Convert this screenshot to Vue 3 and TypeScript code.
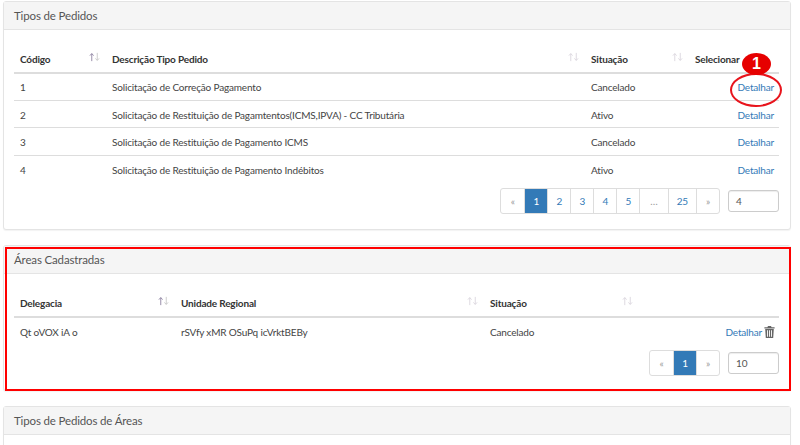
<template>
  <div class="page">
    <section class="panel first">
      <h3 class="panel-title">Tipos de Pedidos</h3>
      <div class="panel-body">
        <table class="grid">
          <colgroup>
            <col style="width: 92px" />
            <col style="width: 479px" />
            <col style="width: 104px" />
            <col />
          </colgroup>
          <thead>
            <tr>
              <th v-for="(h, i) in pedidoCols" :key="h">
                {{ h }}
                <svg v-if="i < 3" class="sort" viewBox="0 0 12 10" :class="{ active: i === 0 }">
                  <path class="up" d="M3 9.5V1.5M1 3.5L3 1.2L5 3.5" />
                  <path class="down" d="M9 .5V8.5M7 6.5L9 8.8L11 6.5" />
                </svg>
              </th>
            </tr>
          </thead>
          <tbody>
            <tr v-for="p in pedidos" :key="p.id">
              <td>{{ p.id }}</td>
              <td>{{ p.desc }}</td>
              <td>{{ p.status }}</td>
              <td class="act"><a>Detalhar</a></td>
            </tr>
          </tbody>
        </table>
        <div class="pager-row">
          <ul class="pager">
            <li
              v-for="n in pages"
              :key="n"
              :class="{ on: n === '1', off: n === '«' || n === '»' || n === '…', wide: n === '…' || n === '25' }"
            >{{ n }}</li>
          </ul>
          <div class="size">4</div>
        </div>
      </div>
      <div class="callout">
        <span class="ring"></span>
        <span class="badge">1</span>
      </div>
    </section>

    <section class="panel second">
      <h3 class="panel-title">Áreas Cadastradas</h3>
      <div class="panel-body">
        <table class="grid">
          <colgroup>
            <col style="width: 161px" />
            <col style="width: 309px" />
            <col style="width: 155px" />
            <col />
          </colgroup>
          <thead>
            <tr>
              <th v-for="h in areaCols" :key="h">
                {{ h }}
                <svg class="sort" viewBox="0 0 12 10" :class="{ active: h === 'Delegacia' }">
                  <path class="up" d="M3 9.5V1.5M1 3.5L3 1.2L5 3.5" />
                  <path class="down" d="M9 .5V8.5M7 6.5L9 8.8L11 6.5" />
                </svg>
              </th>
              <th></th>
            </tr>
          </thead>
          <tbody>
            <tr>
              <td>Qt oVOX iA o</td>
              <td>rSVfy xMR OSuPq icVrktBEBy</td>
              <td>Cancelado</td>
              <td class="act trash-cell">
                <a>Detalhar</a>
                <svg class="trash" viewBox="0 0 11 12">
                  <path d="M4 0h3l.6 1.2H10.6V2.4H.4V1.2H3.4zM1.2 3H9.8L9.2 12H1.8zM3 4.2V10.8H3.9V4.2zM5.05 4.2V10.8H5.95V4.2zM7.1 4.2V10.8H8V4.2z" fill-rule="evenodd" />
                </svg>
              </td>
            </tr>
          </tbody>
        </table>
        <div class="pager-row tight">
          <ul class="pager">
            <li class="off">«</li>
            <li class="on">1</li>
            <li class="off">»</li>
          </ul>
          <div class="size">10</div>
        </div>
      </div>
      <div class="redbox"></div>
    </section>

    <section class="panel third">
      <h3 class="panel-title">Tipos de Pedidos de Áreas</h3>
    </section>
  </div>
</template>

<script setup lang="ts">
const pedidoCols = ["Código", "Descrição Tipo Pedido", "Situação", "Selecionar"]

const areaCols = ["Delegacia", "Unidade Regional", "Situação"]

const pedidos = [
  { id: 1, desc: "Solicitação de Correção Pagamento", status: "Cancelado" },
  { id: 2, desc: "Solicitação de Restituição de Pagamtentos(ICMS,IPVA) - CC Tributária", status: "Ativo" },
  { id: 3, desc: "Solicitação de Restituição de Pagamento ICMS", status: "Cancelado" },
  { id: 4, desc: "Solicitação de Restituição de Pagamento Indébitos", status: "Ativo" },
]

const pages = ["«", "1", "2", "3", "4", "5", "…", "25", "»"]
</script>

<style>
html,
body {
  margin: 0;
  background: #fff;
  overflow: hidden;
}
</style>

<style scoped>
.page {
  width: 800px;
  height: 445px;
  overflow: hidden;
  padding: 1px 9px 0 3px;
  box-sizing: border-box;
  font-family: Lato, "Noto Sans", sans-serif;
  font-size: 10px;
  letter-spacing: -0.17px;
  color: #444;
}

.panel {
  position: relative;
  border: 1px solid #e4e4e4;
  border-radius: 3px;
  box-shadow: 0 1px 1px rgba(0, 0, 0, 0.05);
  background: #fff;
  box-sizing: border-box;
}

.first {
  height: 229px;
  margin-bottom: 15px;
}

.second {
  height: 146px;
  margin-bottom: 15px;
}

.third {
  height: 80px;
}

.panel-title {
  margin: 0;
  height: 27px;
  line-height: 27px;
  padding: 0 10px;
  background: #f5f5f5;
  border-bottom: 1px solid #e4e4e4;
  font-size: 11.5px;
  letter-spacing: -0.15px;
  font-weight: 400;
  color: #555;
}

.panel-body {
  padding: 15px 10px 0;
}

.grid {
  width: 765px;
  table-layout: fixed;
  border-collapse: collapse;
}

.grid th {
  position: relative;
  height: 27px;
  padding: 0 6px;
  text-align: left;
  font-weight: 700;
  color: #333;
  border-bottom: 2px solid #ddd;
}

.grid td {
  height: 27.4px;
  padding: 1px 6px 0;
  border-top: 1px solid #ddd;
  box-sizing: border-box;
  white-space: nowrap;
}

.grid tbody tr:first-child td {
  border-top: 0;
}

.sort {
  position: absolute;
  right: 6px;
  top: 7px;
  width: 11px;
  height: 10px;
  fill: none;
  stroke-width: 1;
}

.sort .up,
.sort .down {
  stroke: #dbd6de;
}

.sort.active .up {
  stroke: #8f84a3;
}

.sort.active .down {
  stroke: #c9c9c9;
}

.grid td.act {
  text-align: right;
  padding-right: 5px;
}

.grid td.trash-cell {
  padding-right: 4px;
}

.act a {
  color: #337ab7;
}

.trash {
  width: 11px;
  height: 12px;
  fill: #666;
  vertical-align: -2px;
  margin-left: 2px;
}

.pager-row {
  display: flex;
  justify-content: flex-end;
  align-items: center;
  gap: 8px;
  margin-top: 5px;
  width: 765px;
}

.pager-row.tight {
  margin-top: 6px;
}

.pager {
  display: flex;
  margin: 0;
  padding: 0;
  list-style: none;
  border: 1px solid #ddd;
  border-radius: 3px;
  height: 24px;
  box-sizing: content-box;
}

.pager li {
  width: 23px;
  box-sizing: border-box;
  line-height: 24px;
  text-align: center;
  color: #337ab7;
  border-left: 1px solid #ddd;
}

.pager li.wide {
  width: 28.4px;
}

.pager li:first-child {
  border-left: 0;
}

.pager .on {
  background: #337ab7;
  color: #fff;
}

.pager .off {
  color: #999;
}

.size {
  width: 51px;
  height: 22px;
  line-height: 21px;
  box-sizing: border-box;
  border: 1px solid #ccc;
  border-radius: 3px;
  padding-left: 7px;
  color: #555;
  box-shadow: inset 0 1px 1px rgba(0, 0, 0, 0.075);
}

.callout {
  position: absolute;
  left: 726px;
  top: 49px;
  width: 52px;
  height: 58px;
}

.ring {
  position: absolute;
  left: 0;
  top: 22px;
  width: 52px;
  height: 34px;
  box-sizing: border-box;
  border: 2px solid #e8141c;
  border-radius: 50%;
}

.badge {
  position: absolute;
  left: 12px;
  top: 2px;
  width: 29px;
  height: 22px;
  border-radius: 50%;
  background: #e60000;
  color: #fff;
  text-align: center;
  line-height: 22px;
  letter-spacing: 0;
  font-family: "Liberation Sans", sans-serif;
  font-size: 16px;
  font-weight: 700;
}

.redbox {
  position: absolute;
  left: 1px;
  top: 1px;
  right: -1px;
  bottom: -1px;
  border: 2px solid #f00;
  pointer-events: none;
}
</style>
